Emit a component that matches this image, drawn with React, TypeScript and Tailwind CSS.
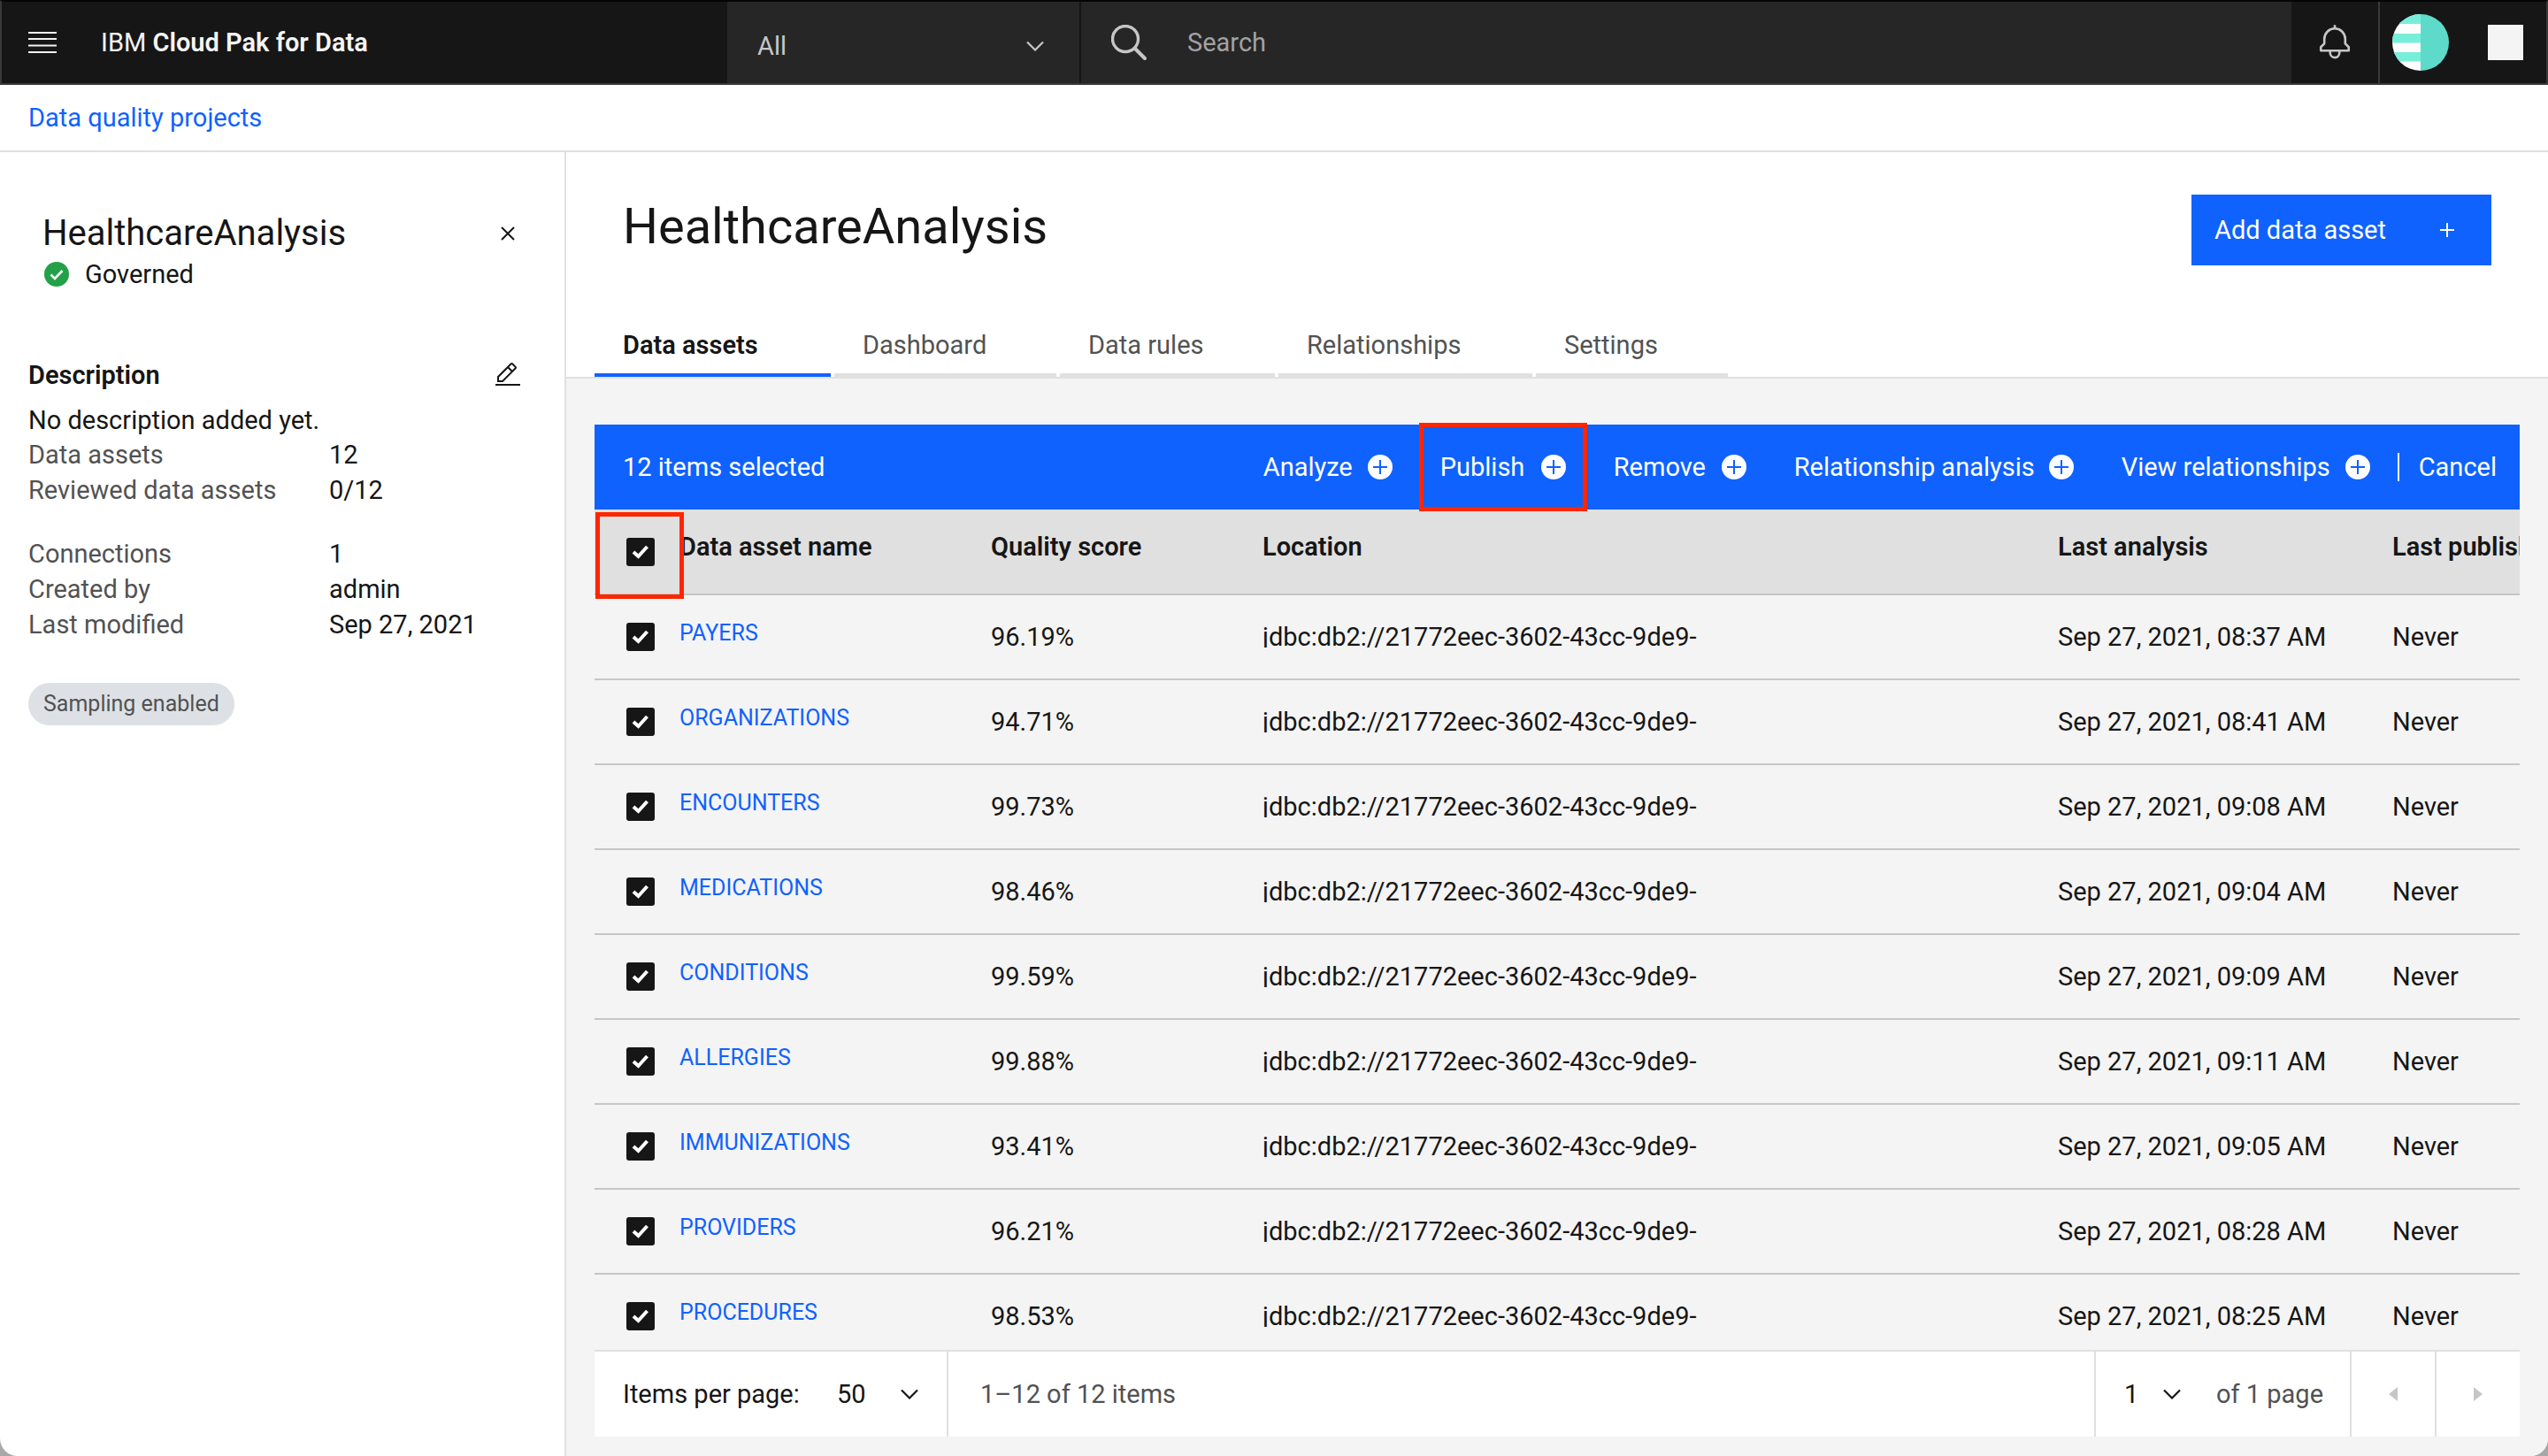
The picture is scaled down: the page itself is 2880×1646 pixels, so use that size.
import type { ReactNode } from 'react';

type Asset = { name: string; score: string; analysis: string };

const assets: Asset[] = [
  { name: 'PAYERS', score: '96.19%', analysis: 'Sep 27, 2021, 08:37 AM' },
  { name: 'ORGANIZATIONS', score: '94.71%', analysis: 'Sep 27, 2021, 08:41 AM' },
  { name: 'ENCOUNTERS', score: '99.73%', analysis: 'Sep 27, 2021, 09:08 AM' },
  { name: 'MEDICATIONS', score: '98.46%', analysis: 'Sep 27, 2021, 09:04 AM' },
  { name: 'CONDITIONS', score: '99.59%', analysis: 'Sep 27, 2021, 09:09 AM' },
  { name: 'ALLERGIES', score: '99.88%', analysis: 'Sep 27, 2021, 09:11 AM' },
  { name: 'IMMUNIZATIONS', score: '93.41%', analysis: 'Sep 27, 2021, 09:05 AM' },
  { name: 'PROVIDERS', score: '96.21%', analysis: 'Sep 27, 2021, 08:28 AM' },
  { name: 'PROCEDURES', score: '98.53%', analysis: 'Sep 27, 2021, 08:25 AM' },
];

const location = 'jdbc:db2://21772eec-3602-43cc-9de9-';

const tabs = [
  { label: 'Data assets', width: 'w-[267px]' },
  { label: 'Dashboard', width: 'w-[251px]' },
  { label: 'Data rules', width: 'w-[243px]' },
  { label: 'Relationships', width: 'w-[287px]' },
  { label: 'Settings', width: 'w-[217px]' },
];

const actions = [
  { label: 'Analyze', width: 'w-[146px]' },
  { label: 'Publish', width: 'w-[142px]' },
  { label: 'Remove', width: 'w-[150px]' },
  { label: 'Relationship analysis', width: 'w-[316px]' },
  { label: 'View relationships', width: 'w-[281px]' },
];

function Chevron() {
  return (
    <svg className="pointer-events-none h-3 w-5" viewBox="0 0 20 12" fill="none" stroke="currentColor" strokeWidth="2.2" aria-hidden="true">
      <path d="M1 1.5 10 10.5 19 1.5" />
    </svg>
  );
}

function CheckMark({ className }: { className: string }) {
  return (
    <svg className={className} viewBox="0 0 20 16" fill="none" stroke="currentColor" strokeWidth="4" aria-hidden="true">
      <path d="M2 8 7.5 13 17.5 2" />
    </svg>
  );
}

function Checkbox({ label }: { label: string }) {
  return (
    <label className="grid size-8 place-items-center">
      <input type="checkbox" defaultChecked aria-label={label} className="col-start-1 row-start-1 size-8 appearance-none rounded-[3px] bg-[#161616]" />
      <CheckMark className="pointer-events-none col-start-1 row-start-1 h-4 w-5 text-white" />
    </label>
  );
}

function PlusFilled() {
  return (
    <svg className="size-7 shrink-0" viewBox="0 0 28 28" aria-hidden="true">
      <circle cx="14" cy="14" r="14" fill="#fff" />
      <path d="M14 6v16M6 14h16" stroke="#0f62fe" strokeWidth="2" />
    </svg>
  );
}

function Fact({ label, children }: { label: string; children: ReactNode }) {
  return (
    <div className="flex">
      <dt className="w-[340px] text-[#525252]">{label}</dt>
      <dd>{children}</dd>
    </div>
  );
}

function Header() {
  return (
    <header className="flex h-24 shrink-0 border-x-2 border-t-2 border-b-2 border-x-[#393939] border-t-[#050505] border-b-[#393939] bg-[#161616] text-[29px] leading-9 text-[#f4f4f4]">
      <div className="flex w-[820px] items-center gap-[50px] pl-[30px]">
        <button aria-label="Menu">
          <svg className="h-6 w-8" viewBox="0 0 32 24" fill="#f4f4f4" aria-hidden="true">
            <path d="M0 0h32v2H0zM0 7h32v2H0zM0 14.5h32v2H0zM0 22h32v2H0z" />
          </svg>
        </button>
        <p>
          IBM <b className="font-semibold">Cloud Pak for Data</b>
        </p>
      </div>
      <label className="grid w-[400px] grid-cols-[1fr_auto] items-center border-r-2 border-[#161616] bg-[#262626] pt-2 text-[#c6c6c6]">
        <select aria-label="Search scope" className="col-span-2 col-start-1 row-start-1 h-full appearance-none bg-transparent pl-[34px]">
          <option>All</option>
        </select>
        <span className="pointer-events-none col-start-2 row-start-1 pr-10">
          <Chevron />
        </span>
      </label>
      <label className="flex grow items-center gap-[46px] bg-[#262626] pl-[34px]">
        <svg className="size-10" viewBox="0 0 40 40" fill="none" stroke="#c6c6c6" aria-hidden="true">
          <circle cx="16" cy="16" r="14.5" strokeWidth="3.4" />
          <path d="M27 27 38 38" strokeWidth="4" strokeLinecap="round" />
        </svg>
        <input type="search" placeholder="Search" aria-label="Search" className="grow bg-transparent outline-none placeholder:text-[#a2a2a2]" />
      </label>
      <button aria-label="Notifications" className="flex w-[100px] items-center justify-center border-r-2 border-[#393939]">
        <svg className="size-[42px]" viewBox="0 0 32 32" fill="#c6c6c6" aria-hidden="true">
          <path d="M28.7071,19.293,26,16.5859V13a10.0136,10.0136,0,0,0-9-9.9492V1H15V3.0508A10.0136,10.0136,0,0,0,6,13v3.5859L3.2929,19.293A1,1,0,0,0,3,20v3a1,1,0,0,0,1,1h7v.7768a5.152,5.152,0,0,0,4.5,5.1987A5.0057,5.0057,0,0,0,21,25V24h7a1,1,0,0,0,1-1V20A1,1,0,0,0,28.7071,19.293ZM19,25a3,3,0,0,1-6,0V24h6Zm8-3H5V20.4141L7.707,17.707A1,1,0,0,0,8,17V13a8,8,0,0,1,16,0v4a1,1,0,0,0,.293.707L27,20.4141Z" />
        </svg>
      </button>
      <div className="flex items-center gap-11 pr-[26px] pl-[14px]">
        <button aria-label="Account">
          <svg className="size-16" viewBox="0 0 64 64" aria-hidden="true">
            <clipPath id="avatar">
              <circle cx="32" cy="32" r="32" />
            </clipPath>
            <g clipPath="url(#avatar)">
              <path fill="#fcfcfc" d="M0 0h32v64H0z" />
              <path fill="#77eeda" d="M0 0h32v11H0zM0 22h32v10.500H0zM0 43h32v10.500H0z" />
              <path fill="#5edacb" d="M32 0h32v64H32z" />
            </g>
          </svg>
        </button>
        <button aria-label="App switcher" className="size-10 bg-[#f4f4f4]" />
      </div>
    </header>
  );
}

function Sidebar() {
  return (
    <aside className="w-[640px] shrink-0 border-r-2 border-[#e0e0e0] px-8 pt-16">
      <div className="flex items-center justify-between pr-6 pl-4">
        <h2 className="text-[40px] leading-[56px]">HealthcareAnalysis</h2>
        <button aria-label="Close panel">
          <svg className="size-4" viewBox="0 0 16 16" stroke="#161616" strokeWidth="2" aria-hidden="true">
            <path d="M1 1 15 15M15 1 1 15" />
          </svg>
        </button>
      </div>
      <p className="flex items-center gap-[18px] pl-[18px] leading-9">
        <svg className="size-7" viewBox="0 0 28 28" fill="none" aria-hidden="true">
          <circle cx="14" cy="14" r="14" fill="#24a148" />
          <path d="M7.500 14.500 12 19 20.500 10" stroke="#fff" strokeWidth="2.6" />
        </svg>
        Governed
      </p>
      <div className="mt-[76px] flex items-center justify-between pr-4 leading-10">
        <h3 className="font-semibold">Description</h3>
        <button aria-label="Edit description">
          <svg className="size-8" viewBox="0 0 32 32" fill="#161616" aria-hidden="true">
            <path d="M2 26H30V28H2zM25.4 9c.8-.8.8-2 0-2.8l-3.600-3.600c-.8-.8-2-.8-2.800 0l-15 15V24h6.400L25.400 9zM20.400 4L24 7.600l-3 3L17.400 7 20.400 4zM6 22v-3.600l10-10 3.600 3.600-10 10H6z" />
          </svg>
        </button>
      </div>
      <p className="mt-3 leading-[38px]">No description added yet.</p>
      <dl className="leading-10">
        <Fact label="Data assets">12</Fact>
        <Fact label="Reviewed data assets">0/12</Fact>
      </dl>
      <dl className="mt-8 leading-10">
        <Fact label="Connections">1</Fact>
        <Fact label="Created by">admin</Fact>
        <Fact label="Last modified">Sep 27, 2021</Fact>
      </dl>
      <span className="mt-[46px] inline-block rounded-full bg-[#dde1e6] px-[17px] text-[25px] leading-[48px] text-[#525252]">Sampling enabled</span>
    </aside>
  );
}

function Toolbar() {
  return (
    <div className="flex h-24 shrink-0 items-center justify-between bg-[#0f62fe] pr-[26px] pl-8 text-white">
      <p>12 items selected</p>
      <div className="flex items-center">
        <div className="flex gap-[54px]">
          {actions.map((a) => (
            <button key={a.label} className={`relative flex items-center justify-between whitespace-nowrap ${a.width}`}>
              {a.label}
              <PlusFilled />
              {a.label === 'Publish' && <span className="pointer-events-none absolute -inset-x-6 -inset-y-8 border-[5px] border-[#ff2600]" />}
            </button>
          ))}
        </div>
        <span className="mr-[22px] ml-[31px] h-8 w-0.5 bg-white" />
        <button>Cancel</button>
      </div>
    </div>
  );
}

function AssetTable() {
  return (
    <div className="min-h-0 grow overflow-hidden">
      <table className="w-full table-fixed border-separate border-spacing-0 text-left whitespace-nowrap">
        <colgroup>
          <col className="w-24" />
          <col className="w-[352px]" />
          <col className="w-[307px]" />
          <col />
          <col className="w-[378px]" />
          <col className="w-[144px]" />
        </colgroup>
        <thead>
          <tr className="h-[97px] bg-[#e0e0e0] align-top [&>th]:border-b-2 [&>th]:border-[#c6c6c6] [&>th]:pt-6 [&>th]:font-semibold">
            <th className="relative pl-9">
              <div className="pt-2">
                <Checkbox label="Select all data assets" />
              </div>
              <span className="pointer-events-none absolute top-[3px] left-px h-[98px] w-[100px] border-[5px] border-[#ff2600]" />
            </th>
            <th>Data asset name</th>
            <th>Quality score</th>
            <th>Location</th>
            <th>Last analysis</th>
            <th>Last published</th>
          </tr>
        </thead>
        <tbody>
          {assets.map((a) => (
            <tr key={a.name} className="h-24 [&>td]:border-b-2 [&>td]:border-[#c6c6c6]">
              <td className="pl-9">
                <Checkbox label={`Select ${a.name}`} />
              </td>
              <td className="pb-2 text-[25px]">
                <a href="#" className="text-[#0f62fe]">
                  {a.name}
                </a>
              </td>
              <td>{a.score}</td>
              <td>
                <div className="overflow-hidden leading-6">{location}</div>
              </td>
              <td>{a.analysis}</td>
              <td>Never</td>
            </tr>
          ))}
        </tbody>
      </table>
    </div>
  );
}

function PageSelect({ id, value, className }: { id: string; value: string; className: string }) {
  return (
    <div className={`grid items-center ${className}`}>
      <select id={id} aria-label={id === 'page' ? 'Page' : undefined} className="col-start-1 row-start-1 w-full appearance-none bg-transparent">
        <option>{value}</option>
      </select>
      <span className="pointer-events-none col-start-1 row-start-1 justify-self-end">
        <Chevron />
      </span>
    </div>
  );
}

function Pagination() {
  return (
    <footer className="flex h-[98px] shrink-0 border-t-2 border-[#e0e0e0] bg-white">
      <div className="flex w-[400px] items-center justify-between border-r-2 border-[#e0e0e0] pr-8 pl-8">
        <label htmlFor="per-page">Items per page:</label>
        <PageSelect id="per-page" value="50" className="w-[92px]" />
      </div>
      <p className="flex grow items-center pl-9 text-[#525252]">1–12 of 12 items</p>
      <div className="flex w-[289px] items-center gap-10 border-l-2 border-[#e0e0e0] pl-8">
        <PageSelect id="page" value="1" className="w-16" />
        <span className="text-[#525252]">of 1 page</span>
      </div>
      <button disabled aria-label="Previous page" className="flex w-24 items-center justify-center border-l-2 border-[#e0e0e0]">
        <svg className="h-4 w-2.5" viewBox="0 0 10 16" fill="#c6c6c6" aria-hidden="true">
          <path d="M10 0v16L0 8z" />
        </svg>
      </button>
      <button disabled aria-label="Next page" className="flex w-24 items-center justify-center border-l-2 border-[#e0e0e0]">
        <svg className="h-4 w-2.5" viewBox="0 0 10 16" fill="#c6c6c6" aria-hidden="true">
          <path d="M0 0v16l10-8z" />
        </svg>
      </button>
    </footer>
  );
}

export default function App() {
  return (
    <div className="h-screen bg-[#a8a8a8] font-['Roboto',sans-serif] text-[29px] leading-9 text-[#161616]">
      <div className="flex h-full flex-col overflow-hidden rounded-b-[20px] bg-white">
        <Header />
        <nav className="flex h-[76px] shrink-0 items-center border-b-2 border-[#e0e0e0] px-8">
          <a href="#" className="text-[#0f62fe]">
            Data quality projects
          </a>
        </nav>
        <div className="flex min-h-0 grow">
          <Sidebar />
          <main className="flex min-w-0 grow flex-col bg-[#f4f4f4]">
            <div className="flex shrink-0 flex-col border-b-2 border-[#e0e0e0] bg-white px-8">
              <div className="flex items-start justify-between pt-12 pr-8 pl-8">
                <h1 className="text-[56px] leading-[72px]">HealthcareAnalysis</h1>
                <button className="flex h-20 w-[339px] items-center justify-between bg-[#0f62fe] pr-[42px] pl-[26px] text-white">
                  Add data asset
                  <svg className="size-4" viewBox="0 0 16 16" stroke="currentColor" strokeWidth="2" aria-hidden="true">
                    <path d="M8 0v16M0 8h16" />
                  </svg>
                </button>
              </div>
              <div role="tablist" className="mt-[58px] flex gap-1">
                {tabs.map((t, i) => (
                  <button
                    key={t.label}
                    role="tab"
                    aria-selected={i === 0}
                    className={`h-[68px] border-b-4 pl-8 text-left ${t.width} ${i === 0 ? 'border-[#0f62fe] font-semibold' : 'border-[#e0e0e0] text-[#525252]'}`}
                  >
                    {t.label}
                  </button>
                ))}
              </div>
            </div>
            <div className="flex min-h-0 grow flex-col px-8 pt-[52px] pb-[22px]">
              <Toolbar />
              <AssetTable />
              <Pagination />
            </div>
          </main>
        </div>
      </div>
    </div>
  );
}
